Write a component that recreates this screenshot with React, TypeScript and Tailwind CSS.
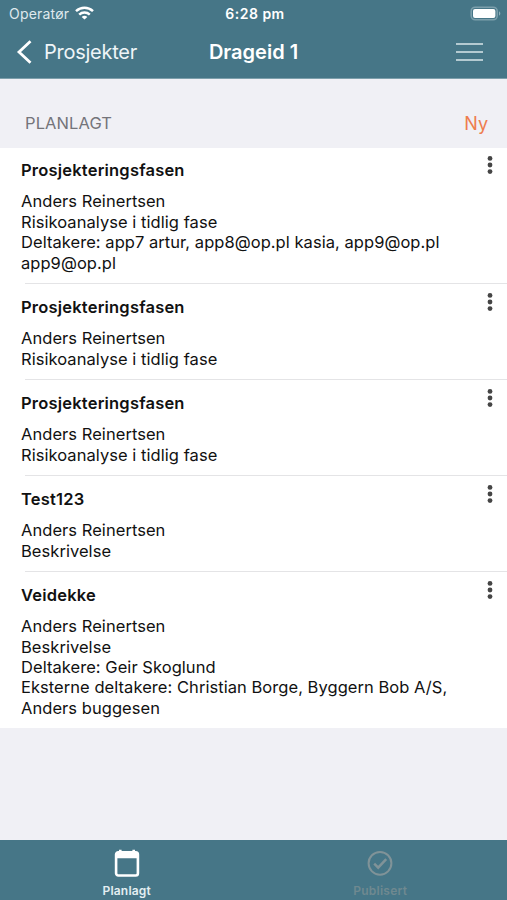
import { clsx } from 'clsx';

const projects = [
  {
    id: 'p1',
    title: 'Prosjekteringsfasen',
    lines: ['Anders Reinertsen', 'Risikoanalyse i tidlig fase', 'Deltakere: app7 artur, app8@op.pl kasia, app9@op.pl', 'app9@op.pl'],
  },
  { id: 'p2', title: 'Prosjekteringsfasen', lines: ['Anders Reinertsen', 'Risikoanalyse i tidlig fase'] },
  { id: 'p3', title: 'Prosjekteringsfasen', lines: ['Anders Reinertsen', 'Risikoanalyse i tidlig fase'] },
  { id: 'p4', title: 'Test123', lines: ['Anders Reinertsen', 'Beskrivelse'] },
  {
    id: 'p5',
    title: 'Veidekke',
    lines: ['Anders Reinertsen', 'Beskrivelse', 'Deltakere: Geir Skoglund', 'Eksterne deltakere: Christian Borge, Byggern Bob A/S,', 'Anders buggesen'],
  },
];

function StatusBar() {
  return (
    <div className="grid h-[27px] grid-cols-3 items-center pl-[9px] pr-[6px]">
      <div className="flex items-center gap-1.5">
        <span className="text-[14px] tracking-[0.2px] text-[#dfe9ed]">Operatør</span>
        <svg className="-mt-0.5 h-[14px] w-[19px]" viewBox="0 0 19 14" fill="none" stroke="white" strokeWidth="2.5">
          <path d="M1 5.2C6 .6 13 .6 18 5.2" />
          <path d="M4.2 8.6C7.2 5.8 11.8 5.8 14.8 8.6" />
          <path d="M9.5 13.6 6.7 10.9C8.2 9.5 10.8 9.5 12.3 10.9Z" fill="white" stroke="none" />
        </svg>
      </div>
      <span className="text-center text-[14px] font-semibold tracking-[0.5px] text-white">6:28 pm</span>
      <svg className="h-[15px] w-[31px] justify-self-end" viewBox="0 0 31 15" fill="none">
        <rect x="1.2" y="1.2" width="26" height="12.6" rx="4" stroke="#7c9fac" strokeWidth="1.6" />
        <rect x="3" y="3" width="22.4" height="9" rx="2" fill="white" />
        <path d="M29 5.3C30.8 6.2 30.8 8.8 29 9.7Z" fill="#8fafba" />
      </svg>
    </div>
  );
}

function NavBar() {
  return (
    <div className="grid grow grid-cols-3 items-center px-4 pb-px text-white">
      <button className="flex items-center gap-3">
        <svg className="h-6 w-4" viewBox="0 0 16 24" fill="none" stroke="white" strokeWidth="2.8">
          <path d="M14.5 1.2 3 12 14.5 22.8" />
        </svg>
        <span className="text-[20px] tracking-[-0.25px] text-[#eef5f8]">Prosjekter</span>
      </button>
      <h1 className="text-center text-[20px] font-semibold">Drageid 1</h1>
      <button className="mr-2 flex w-[27px] flex-col gap-1.5 justify-self-end">
        <span className="h-0.5 bg-[#b4cad1]" />
        <span className="h-0.5 bg-[#b4cad1]" />
        <span className="h-0.5 bg-[#b4cad1]" />
      </button>
    </div>
  );
}

function ProjectRow({ title, lines, first }: { title: string; lines: string[]; first: boolean }) {
  return (
    <li className={clsx('flex justify-between pb-[10px] pl-[21px]', first ? 'pt-[12.2px]' : 'pt-[13px]')}>
      <div>
        <h2 className="text-[16.5px] leading-[21px] font-semibold tracking-[0.2px]">{title}</h2>
        <div className="mt-[10.2px] text-[16.5px] leading-[20.4px] tracking-[0.05px]">
          {lines.map((line) => (
            <p key={line} className="whitespace-nowrap">{line}</p>
          ))}
        </div>
      </div>
      <svg className="-mt-[5px] mr-[13px] h-5 w-2 shrink-0" viewBox="0 0 8 20" fill="#454545">
        <circle cx="4" cy="3.4" r="2.4" />
        <circle cx="4" cy="10" r="2.4" />
        <circle cx="4" cy="16.6" r="2.4" />
      </svg>
    </li>
  );
}

export default function App() {
  return (
    <div className="flex h-[900px] w-[507px] flex-col overflow-hidden bg-[#f0f0f5] font-['Inter','Liberation_Sans',sans-serif] text-[#111111]">
      {/* Header */}
      <header className="flex h-[79px] flex-col border-b border-[#7d9fab] bg-[#467687]">
        <StatusBar />
        <NavBar />
      </header>

      {/* Section title */}
      <div className="flex h-[69px] items-end justify-between pr-[19px] pb-[11px] pl-[25px]">
        <span className="pb-px text-[16.5px] tracking-[0.1px] text-[#74747a]">PLANLAGT</span>
        <button className="text-[18px] text-[#ee7d4d]">Ny</button>
      </div>

      {/* Project list */}
      <ul className="bg-white">
        {projects.map((project, i) => (
          <div key={project.id}>
            {i > 0 && <div className="ml-[25px] h-px bg-[#e4e4e6]" />}
            <ProjectRow title={project.title} lines={project.lines} first={i === 0} />
          </div>
        ))}
      </ul>

      {/* Tab bar */}
      <nav className="mt-auto grid h-[60px] grid-cols-2 bg-[#467687] text-[12px] font-semibold">
        <button className="flex flex-col items-center gap-1 pt-2 text-[#e3eef2]">
          <svg className="h-[30px] w-[28px]" viewBox="0 0 28 30" fill="none">
            <rect x="3.1" y="4.3" width="21.8" height="23.2" rx="2.2" stroke="white" strokeWidth="2.6" />
            <path d="M3 4H25V10.3H3ZM6 1.8H8.6V5H6ZM19.4 1.8H22V5H19.4Z" fill="white" />
          </svg>
          <span className="tracking-[0.2px]">Planlagt</span>
        </button>
        <button className="flex flex-col items-center gap-1 pt-2 text-[#6f8990]">
          <svg className="h-[30px] w-[28px]" viewBox="0 0 28 30" fill="none" stroke="#809398">
            <circle cx="14" cy="15.3" r="11.4" strokeWidth="2" />
            <path d="M8.2 15.6 12.2 19.6 20.2 11.2" strokeWidth="2.5" />
          </svg>
          <span className="tracking-[0.25px]">Publisert</span>
        </button>
      </nav>
    </div>
  );
}
